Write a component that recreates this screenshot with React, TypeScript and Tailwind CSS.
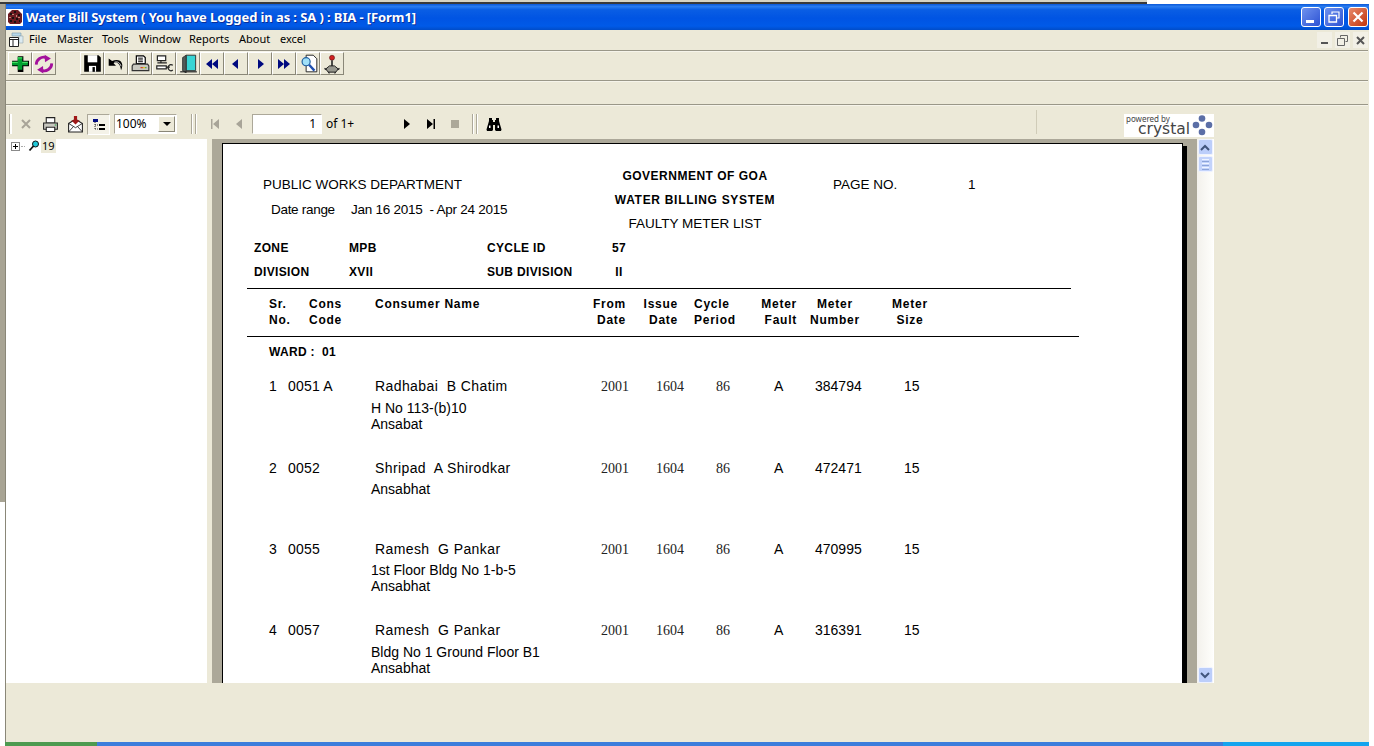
import React from "react";

const Btn = ({ children, className = "" }: { children: React.ReactNode; className?: string }) => (
  <div className={"w-[24px] h-[23px] shrink-0 flex items-center justify-center border border-t-white border-l-white border-r-[#8a8778] border-b-[#8a8778] " + className}>
    {children}
  </div>
);

const Ic = ({ children, s = 18 }: { children: React.ReactNode; s?: number }) => (
  <svg width={s} height={s} viewBox="0 0 16 16" className="block">{children}</svg>
);

const Plus = () => (
  <Ic><path d="M6 1h5v4h5v5h-5v5H6v-5H1V5h5z" fill="#000" /><path d="M6 2h4v4h5v3h-5v4H6V9H1V6h5z" fill="#00a030" /><path d="M6 2h4v1H6zM1 6h5v1H1zM10 6h5v1h-5z" fill="#40e060" /></Ic>
);
const Refresh = () => (
  <Ic s={20}>
    <path d="M1.800 8.500A6 6 0 0 1 10 3" fill="none" stroke="#a3109c" strokeWidth="2.200" />
    <path d="M8.500 0.500L13.500 3.500 8.800 6.500z" fill="#a3109c" />
    <path d="M14.200 7.500A6 6 0 0 1 6 13" fill="none" stroke="#a3109c" strokeWidth="2.200" />
    <path d="M7.500 15.500L2.500 12.500 7.200 9.500z" fill="#a3109c" />
  </Ic>
);
const Floppy = () => (
  <Ic s={19}><path d="M1 1h12l2 2v12H1z" fill="#000" /><path d="M4 1h8v6H4z" fill="#fff" /><path d="M5 10h6v5H5z" fill="#fff" /><path d="M8 11h2v4H8z" fill="#000" /></Ic>
);
const Undo = () => (
  <Ic s={18}>
    <path d="M1.500 3v6.500H8L5.800 7.300C8.500 5.800 11.500 7 12.500 13.500 15.500 8 12.500 2.500 4.500 5.300z" fill="#000" />
    <path d="M6.500 6.500C9 5.500 11.500 6.500 12.500 10" fill="none" stroke="#fff" strokeWidth="0.7" />
  </Ic>
);
const Printer = () => (
  <Ic s={19}>
    <path d="M4.500 1.500h6l1.500 1.500v5h-7.500z" fill="#fff" stroke="#000" />
    <path d="M6 3.500h4M6 5h4M6 6.500h4" stroke="#000" strokeWidth="0.8" />
    <path d="M2 8.500h12l1 1.500v4H1v-4z" fill="#c8c8c0" stroke="#333" />
    <path d="M8 11h2v1H8z" fill="#d04020" /><path d="M10 11h2v1h-2z" fill="#e0c020" /><path d="M12 11h1v1h-1z" fill="#30a040" />
  </Ic>
);
const Network = () => (
  <Ic s={19}>
    <path d="M2 1.500h7v4H2zM2 7.500h8" fill="#fff" stroke="#222" />
    <path d="M5 5.500v2" stroke="#222" />
    <path d="M1.500 10h8v2.500h-8z" fill="#fff" stroke="#222" />
    <path d="M9.500 11h3M15 9.500a2.500 2.500 0 1 0 0 4" fill="none" stroke="#222" />
  </Ic>
);
const Door = () => (
  <Ic s={19}>
    <path d="M6 1h8v13H6z" fill="#38d4d4" stroke="#333" strokeWidth="0.8" />
    <path d="M6 1L3 3v11l3 2z" fill="#505a58" stroke="#222" strokeWidth="0.6" />
    <path d="M1 15h14" stroke="#222" />
  </Ic>
);
const Tri = ({ d, color = "#000a80" }: { d: string; color?: string }) => (
  <Ic s={16}><path d={d} fill={color} /></Ic>
);
const DocSearch = () => (
  <Ic s={19}>
    <path d="M6 1h6l3 3v11H6z" fill="#fff" stroke="#222" strokeWidth="0.8" />
    <circle cx="6" cy="6.500" r="3.400" fill="#a0e0f8" stroke="#2060a0" strokeWidth="1" />
    <path d="M8.500 9l4.500 5" stroke="#2050b0" strokeWidth="2" />
  </Ic>
);
const Joystick = () => (
  <Ic s={20}>
    <circle cx="8" cy="3" r="2" fill="#d02020" stroke="#601010" strokeWidth="0.5" />
    <path d="M8 5v5" stroke="#333" strokeWidth="1.400" />
    <path d="M3 12l3-2.500h4l3 2.500-2 2.500H5z" fill="#98988f" stroke="#222" strokeWidth="0.8" />
    <path d="M2 11.500l1.500 1M14 11.500l-1.500 1M5 14.500l1 1M11 14.500l-1 1" stroke="#222" strokeWidth="1" />
  </Ic>
);

const MainToolbar = () => (
  <div className="h-[28px] flex items-start pl-[2px]">
    <Btn><Plus /></Btn>
    <Btn><Refresh /></Btn>
    <Btn className="ml-[24px]"><Floppy /></Btn>
    <Btn><Undo /></Btn>
    <Btn><Printer /></Btn>
    <Btn><Network /></Btn>
    <Btn><Door /></Btn>
    <Btn><Tri d="M8 3v10L2 8zM14 3v10L8 8z" /></Btn>
    <Btn><Tri d="M10 3v10L4 8z" /></Btn>
    <Btn><Tri d="M6 3v10l6-5z" /></Btn>
    <Btn><Tri d="M2 3v10l6-5zM8 3v10l6-5z" /></Btn>
    <Btn><DocSearch /></Btn>
    <Btn><Joystick /></Btn>
  </div>
);

const Grip = () => (
  <div className="w-[7px] h-[20px] flex gap-[2px] shrink-0">
    <div className="w-[2px] h-full bg-white border-l border-[#aca899]" />
    <div className="w-[2px] h-full bg-white border-l border-[#aca899]" />
  </div>
);

const Slot = ({ children, className = "" }: { children: React.ReactNode; className?: string }) => (
  <div className={"w-[24px] h-[20px] shrink-0 flex items-center justify-center " + className}>{children}</div>
);

const CrystalLogo = () => (
  <div className="ml-[87px] w-[90px] h-[23px] bg-white shrink-0 flex overflow-hidden">
    <div className="w-[68px] shrink-0">
      <div className="text-[8px] leading-[8px] pl-[2px] pt-[1px] text-[#444] [font-family:'Noto_Sans',sans-serif]">powered by</div>
      <div className="text-[15.5px] leading-[14px] pl-[14px] text-[#444] [font-family:'DejaVu_Sans',sans-serif] -mt-[1px]">crystal</div>
    </div>
    <svg width="22" height="23" viewBox="0 0 22 23" className="block">
      <circle cx="10" cy="4.500" r="3.300" fill="#5b6ea6" />
      <circle cx="4" cy="11" r="3.300" fill="#5b6ea6" />
      <circle cx="17" cy="11" r="3.300" fill="#5b6ea6" />
      <circle cx="10" cy="18" r="3.300" fill="#5b6ea6" />
    </svg>
  </div>
);

const ReportToolbar = () => (
  <div className="h-[33px] flex items-start pt-[8px] pl-[3px] [font-family:'Noto_Sans',sans-serif] text-[11px] text-black">
    <div className="w-[3px] h-[20px] bg-white border-l border-[#aca899] shrink-0" />
    <Slot className="ml-[2px]">
      <svg width="12" height="12" viewBox="0 0 12 12"><path d="M2 2l8 8M10 2l-8 8" stroke="#a8a498" strokeWidth="2" /></svg>
    </Slot>
    <Slot>
      <Ic s={17}>
        <path d="M4 1.500h8v5H4z" fill="#fff" stroke="#222" />
        <path d="M1.500 6.500h13v6h-13z" fill="#c8c8c0" stroke="#222" />
        <path d="M4 10.500h8v4H4z" fill="#fff" stroke="#222" />
        <path d="M12 8h1.500v1H12z" fill="#20a040" />
      </Ic>
    </Slot>
    <Slot className="ml-[1px]">
      <Ic s={17}>
        <path d="M1.500 7L8 3l6.500 4v8h-13z" fill="#fff" stroke="#222" />
        <path d="M1.500 7L8 11l6.500-4M1.500 15L6 10M14.500 15L10 10" fill="none" stroke="#222" strokeWidth="0.8" />
        <path d="M6.500 0h3v4H12L8 8 4 4h2.500z" fill="#a01818" />
      </Ic>
    </Slot>
    <div className="w-[23px] h-[21px] shrink-0 bg-[#f4f2e8] border border-t-[#aca899] border-l-[#aca899] border-r-white border-b-white flex items-center justify-center">
      <svg width="14" height="14" viewBox="0 0 14 14">
        <path d="M1 1h5v3H1z" fill="#000a80" />
        <path d="M3 4v8M3 7h3M3 11h3" stroke="#000" strokeWidth="0.8" strokeDasharray="1 1" />
        <path d="M7 6h6v2H7zM7 10h6v2H7z" fill="#000" />
      </svg>
    </div>
    <div className="ml-[4px] w-[63px] h-[20px] shrink-0 bg-white border border-t-[#aca899] border-l-[#aca899] border-r-white border-b-white flex items-center justify-between">
      <span className="pl-[1px] text-[12px] leading-[14px]">100%</span>
      <div className="w-[17px] h-[16px] mr-[1px] bg-[#ece9d8] border border-t-white border-l-white border-r-[#8a8778] border-b-[#8a8778] flex items-center justify-center">
        <div className="w-0 h-0 border-l-[4px] border-r-[4px] border-t-[4px] border-l-transparent border-r-transparent border-t-black" />
      </div>
    </div>
    <div className="ml-[14px]"><Grip /></div>
    <Slot className="ml-[5px]">
      <svg width="12" height="12" viewBox="0 0 12 12"><path d="M2 1h1.500v10H2zM10 1v10L4 6z" fill="#a8a498" /></svg>
    </Slot>
    <Slot>
      <svg width="12" height="12" viewBox="0 0 12 12"><path d="M9 1v10L3 6z" fill="#a8a498" /></svg>
    </Slot>
    <div className="ml-[1px] w-[70px] h-[20px] shrink-0 bg-white border border-t-[#aca899] border-l-[#aca899] border-r-white border-b-white flex items-center justify-end pr-[5px] text-[12px]">1</div>
    <div className="ml-[4px] w-[69px] h-[20px] shrink-0 flex items-center text-[12px]">of 1+</div>
    <Slot>
      <svg width="12" height="12" viewBox="0 0 12 12"><path d="M3 1v10l6-5z" fill="#000" /></svg>
    </Slot>
    <Slot>
      <svg width="12" height="12" viewBox="0 0 12 12"><path d="M2 1v10l6-5zM8.500 1H10v10H8.500z" fill="#000" /></svg>
    </Slot>
    <Slot>
      <div className="w-[8px] h-[8px] bg-[#aca899]" />
    </Slot>
    <div className="ml-[5px]"><Grip /></div>
    <Slot className="ml-[3px]">
      <svg width="16" height="14" viewBox="0 0 16 14">
        <path d="M3 1h3v2h1v2h2V3h1V1h3v3l2.500 8.500L15 14H10l-1-1V8H7v5l-1 1H1l-.5-1.500L3 4z" fill="#000" />
        <path d="M3 8.500h1.500V11H3zM11.500 8.500H13V11h-1.500z" fill="#fff" />
      </svg>
    </Slot>
    <div className="ml-[530px] w-[1px] h-[24px] -mt-[4px] bg-[#d0ccb8] shrink-0" />
    <div><CrystalLogo /></div>
  </div>
);

const Bold = "font-bold text-[12px] leading-[16px]";

const Heading = () => (
  <div className="flex pt-[24px] h-[96px] text-[13.5px] leading-[16px]">
    <div className="w-[372px] shrink-0 pl-[40px] pt-[9px]">
      <div className="h-[25px]">PUBLIC WORKS DEPARTMENT</div>
      <div className="pl-[8px] flex">
        <span className="w-[80px] tracking-[-0.3px]">Date range</span>
        <span className="whitespace-pre tracking-[-0.25px]">Jan 16 2015  - Apr 24 2015</span>
      </div>
    </div>
    <div className="w-[200px] shrink-0 text-center">
      <div className={Bold + " h-[24px] tracking-[0.5px]"}>GOVERNMENT OF GOA</div>
      <div className={Bold + " h-[24px] tracking-[0.7px]"}>WATER BILLING SYSTEM</div>
      <div className="h-[24px]">FAULTY METER LIST</div>
    </div>
    <div className="pl-[38px] pt-[9px] flex">
      <span className="w-[135px]">PAGE NO.</span>
      <span>1</span>
    </div>
  </div>
);

const InfoRow = ({ a, b, c, d }: { a: string; b: string; c: string; d: string }) => (
  <div className={Bold + " h-[24px] flex pl-[31px] tracking-[0.35px]"}>
    <span className="w-[95px]">{a}</span>
    <span className="w-[138px]">{b}</span>
    <span className="w-[117px]">{c}</span>
    <span className="w-[30px] text-center">{d}</span>
  </div>
);

const Lines = ({ a, b, className = "" }: { a: string; b?: string; className?: string }) => (
  <div className={"shrink-0 " + className}>
    <div>{a}</div>
    {b ? <div>{b}</div> : null}
  </div>
);

const HeaderRow = () => (
  <div className={Bold + " flex pl-[46px] pt-[7px] pb-[8px] whitespace-nowrap tracking-[0.75px]"}>
    <Lines a="Sr." b="No." className="w-[40px]" />
    <Lines a="Cons" b="Code" className="w-[66px]" />
    <Lines a="Consumer Name" className="w-[215px]" />
    <Lines a="From" b="Date" className="w-[36px] text-right" />
    <Lines a="Issue" b="Date" className="w-[52px] text-right" />
    <Lines a="Cycle" b="Period" className="w-[60px] pl-[16px]" />
    <Lines a="Meter" b="Fault" className="w-[59px] text-right" />
    <Lines a="Meter" b="Number" className="w-[76px] text-center" />
    <Lines a="Meter" b="Size" className="w-[74px] text-center" />
  </div>
);

const Digits = ({ v }: { v: string }) => (
  <div className="[font-family:'Liberation_Serif',serif] text-[14px] text-[#222] mt-[1px]">{v}</div>
);

const Record = ({ sr, code, name, num, lines, addrClass }: { sr: string; code: string; name: string; num: string; lines: string[]; addrClass: string }) => (
  <div className="h-[81px] text-[14px] leading-[16px]">
    <div className="grid grid-cols-[65px_87px_226px_55px_60px_57px_41px_90px_60px] whitespace-pre">
      <div className="pl-[46px]">{sr}</div>
      <div className="tracking-[0.2px]">{code}</div>
      <div className="tracking-[0.4px]">{name}</div>
      <Digits v="2001" />
      <Digits v="1604" />
      <Digits v="86" />
      <div className="pl-[1px]">A</div>
      <div className="pl-[1px]">{num}</div>
      <div>15</div>
    </div>
    <div className={"pl-[148px] overflow-hidden " + addrClass}>
      {lines.map((l) => (
        <div key={l}>{l}</div>
      ))}
    </div>
  </div>
);

const ReportPage = () => (
  <div className="w-[961px] h-[900px] shrink-0 bg-white border border-black shadow-[4px_3px_0_#000] text-black [font-family:'Liberation_Sans',sans-serif]">
    <Heading />
    <InfoRow a="ZONE" b="MPB" c="CYCLE ID" d="57" />
    <InfoRow a="DIVISION" b="XVII" c="SUB DIVISION" d="II" />
    <div className="ml-[24px] w-[824px] h-[1px] bg-black" />
    <HeaderRow />
    <div className="ml-[24px] w-[832px] h-[1px] bg-black" />
    <div className={Bold + " pl-[46px] pt-[7px] h-[41px] tracking-[0.3px] whitespace-pre"}>WARD :  01</div>
    <div className="h-[82px]">
      <Record sr="1" code="0051 A" name="Radhabai  B Chatim" num="384794" lines={["H No 113-(b)10", "Ansabat"]} addrClass="mt-[5px] h-[29px]" />
    </div>
    <Record sr="2" code="0052" name="Shripad  A Shirodkar" num="472471" lines={["Ansabhat"]} addrClass="mt-[4px] h-[30px]" />
    <Record sr="3" code="0055" name="Ramesh  G Pankar" num="470995" lines={["1st Floor Bldg No 1-b-5", "Ansabhat"]} addrClass="mt-[4px] h-[33px]" />
    <Record sr="4" code="0057" name="Ramesh  G Pankar" num="316391" lines={["Bldg No 1 Ground Floor B1", "Ansabhat"]} addrClass="mt-[5px] h-[30px]" />
  </div>
);

const ScrollBtn = ({ up }: { up: boolean }) => (
  <div className="mx-auto w-[15px] h-[16px] shrink-0 rounded-[2px] bg-[#bccefa] border border-[#eef2ff] flex items-center justify-center">
    <svg width="10" height="7" viewBox="0 0 10 7">
      <path d={up ? "M1 6l4-4 4 4" : "M1 1l4 4 4-4"} fill="none" stroke="#41557c" strokeWidth="2" />
    </svg>
  </div>
);

const Scrollbar = () => (
  <div className="w-[17px] shrink-0 flex flex-col bg-[linear-gradient(90deg,#f3f1ec,#fefefb)] border-r border-white">
    <ScrollBtn up />
    <div className="mx-auto mt-[1px] w-[15px] h-[16px] rounded-[2px] bg-[#c3d3fb] border border-[#eef2ff] flex flex-col items-center justify-center gap-[1px]">
      <div className="w-[7px] h-[1px] bg-[#eef4ff]" />
      <div className="w-[7px] h-[1px] bg-[#8ca4d8]" />
      <div className="w-[7px] h-[1px] bg-[#eef4ff]" />
      <div className="w-[7px] h-[1px] bg-[#8ca4d8]" />
      <div className="w-[7px] h-[1px] bg-[#eef4ff]" />
      <div className="w-[7px] h-[1px] bg-[#8ca4d8]" />
    </div>
    <div className="flex-1" />
    <ScrollBtn up={false} />
  </div>
);

const WinBtn = ({ className, children }: { className: string; children: React.ReactNode }) => (
  <div className={"w-[20px] h-[20px] rounded-[3px] border border-white flex items-center justify-center shrink-0 " + className}>{children}</div>
);

const TitleBar = () => (
  <div className="h-[26px] shrink-0 flex items-center bg-[linear-gradient(180deg,#0a58d8_0%,#2a7cf0_10%,#0a5ee4_22%,#0054e3_55%,#005ae8_85%,#004cc8_100%)]">
    <div className="w-[17px] h-[17px] shrink-0 bg-white flex items-center justify-center">
      <svg width="16" height="16" viewBox="0 0 16 16">
        <path d="M1 5l4-4h6l4 4v8l-2 2H3l-2-2z" fill="#6a1a20" />
        <path d="M3 4h2v2H3zM7 2h2v2H7zM11 5h2v2h-2zM5 8h2v2H5zM9 9h2v2H9zM3 11h2v2H3zM12 11h1v2h-1zM7 12h2v2H7z" fill="#181010" />
        <path d="M5 5h2v1H5zM9 6h1v2H9zM2 8h2v1H2zM11 8h2v1h-2z" fill="#c08878" />
      </svg>
    </div>
    <div className="ml-[3px] flex-1 text-white font-bold text-[13px] leading-[16px] tracking-[-0.1px] whitespace-pre [font-family:'Noto_Sans',sans-serif] [text-shadow:1px_1px_0_#0a2e98]">
      Water Bill System ( You have Logged in as : SA ) : BIA - [Form1]
    </div>
    <div className="flex items-center mr-[1px] gap-[3px]">
      <WinBtn className="bg-[linear-gradient(135deg,#6f92ee,#2c52d4)]">
        <div className="w-[8px] h-[3px] bg-white mt-[9px] -ml-[2px]" />
      </WinBtn>
      <WinBtn className="bg-[linear-gradient(135deg,#6f92ee,#2c52d4)]">
        <svg width="12" height="12" viewBox="0 0 12 12">
          <path d="M4 3V1h7v6H9" fill="none" stroke="#fff" strokeWidth="1.200" />
          <path d="M1 4.500h7.500v6.500H1z" fill="none" stroke="#fff" strokeWidth="1.300" />
        </svg>
      </WinBtn>
      <WinBtn className="bg-[linear-gradient(135deg,#e88a6c,#c1340c)] ml-[1px]">
        <svg width="14" height="14" viewBox="0 0 14 14">
          <path d="M2.500 2.500l9 9M11.500 2.500l-9 9" stroke="#fff" strokeWidth="2.200" />
        </svg>
      </WinBtn>
    </div>
  </div>
);

const MenuItem = ({ label, className }: { label: string; className: string }) => (
  <span className={"shrink-0 " + className}>{label}</span>
);

const MenuBar = () => (
  <div className="h-[20px] shrink-0 flex items-center text-[11px] text-black [font-family:'Noto_Sans',sans-serif]">
    <div className="ml-[2px] w-[16px] h-[16px] shrink-0">
      <svg width="16" height="16" viewBox="0 0 16 16">
        <path d="M4 1h9v3H4z" fill="#b8d8e8" stroke="#7898a8" strokeWidth="0.6" />
        <path d="M11 4h4v7h-4z" fill="#dceaf0" stroke="#98a8b0" strokeWidth="0.6" />
        <path d="M1.500 5.500h9v9h-9z" fill="#fff" stroke="#222" />
        <path d="M1.500 7.500h9M5 7.500v7" stroke="#222" />
      </svg>
    </div>
    <div className="ml-[5px] flex flex-1 pb-[2px]">
      <MenuItem label="File" className="w-[28px]" />
      <MenuItem label="Master" className="w-[45px]" />
      <MenuItem label="Tools" className="w-[37px]" />
      <MenuItem label="Window" className="w-[50px]" />
      <MenuItem label="Reports" className="w-[50px]" />
      <MenuItem label="About" className="w-[41px]" />
      <MenuItem label="excel" className="w-[40px]" />
    </div>
    <div className="flex gap-[3px] mr-[1px] h-[16px]">
      <div className="w-[15px] flex items-center justify-center bg-[#f2f0e6]"><div className="w-[7px] h-[2px] bg-[#555] mt-[6px]" /></div>
      <div className="w-[15px] flex items-center justify-center bg-[#f2f0e6]">
        <svg width="11" height="11" viewBox="0 0 11 11"><path d="M3.500 2.500V.5h7v6H8.500" fill="none" stroke="#666" /><path d="M.5 3.500h7v7h-7z" fill="none" stroke="#666" /></svg>
      </div>
      <div className="w-[15px] flex items-center justify-center bg-[#f2f0e6]">
        <svg width="9" height="9" viewBox="0 0 9 9"><path d="M1 1l7 7M8 1l-7 7" stroke="#555" strokeWidth="2" /></svg>
      </div>
    </div>
  </div>
);

const Rule = () => (
  <div className="h-[2px] shrink-0 mr-[1px]">
    <div className="h-[1px] bg-[#9a9788]" />
    <div className="h-[1px] bg-[#f6f4ea]" />
  </div>
);

const Tree = () => (
  <div className="w-[201px] shrink-0 bg-white">
    <div className="flex items-center h-[14px] pl-[5px] text-[11px] [font-family:'Noto_Sans',sans-serif] text-black">
      <div className="w-[9px] h-[9px] border border-[#8a8a8a] flex items-center justify-center relative shrink-0">
        <div className="w-[5px] h-[1px] bg-black" />
        <div className="w-[1px] h-[5px] bg-black absolute" />
      </div>
      <div className="w-[4px] ml-[1px] border-t border-dotted border-[#aaa] shrink-0" />
      <svg width="12" height="12" viewBox="0 0 12 12" className="ml-[3px] shrink-0">
        <circle cx="7.500" cy="4" r="3" fill="#20c8d8" stroke="#111" strokeWidth="1" />
        <path d="M5.500 6L1.500 10.500" stroke="#111" strokeWidth="1.800" />
      </svg>
      <div className="ml-[1px] px-[1px] bg-[#ece9d8] h-[14px] flex items-center">19</div>
    </div>
  </div>
);

export default function App() {
  return (
    <div className="w-[1374px] h-[746px] bg-white flex flex-col overflow-hidden">
      <div className="h-[4px] shrink-0 flex">
        <div className="w-[1147px] h-[4px] bg-[#d8d4c4] border-b-[2px] border-[#3a3a3a]" />
      </div>
      <div className="flex-1 flex min-h-0">
        <div className="w-[5px] shrink-0">
          <div className="h-[498px] bg-[#a8a494]" />
        </div>
        <div className="w-[1364px] shrink-0 bg-[#ece9d8] border-l border-[#8a8778] flex flex-col">
          <TitleBar />
          <MenuBar />
          <Rule />
          <MainToolbar />
          <Rule />
          <div className="h-[22px] shrink-0" />
          <Rule />
          <ReportToolbar />
          <div className="h-[544px] shrink-0 flex">
            <Tree />
            <div className="w-[5px] shrink-0" />
            <div className="w-[985px] shrink-0 bg-[#aca899] overflow-hidden pl-[10px] pt-[4px]">
              <ReportPage />
            </div>
            <Scrollbar />
          </div>
          <div className="flex-1" />
        </div>
      </div>
      <div className="h-[4px] shrink-0 flex">
        <div className="w-[5px] shrink-0" />
        <div className="w-[92px] bg-[#4d9a50] shrink-0" />
        <div className="w-[1126px] bg-[#3c7ddc] shrink-0" />
        <div className="w-[146px] bg-[#14a4ee] shrink-0" />
      </div>
    </div>
  );
}
